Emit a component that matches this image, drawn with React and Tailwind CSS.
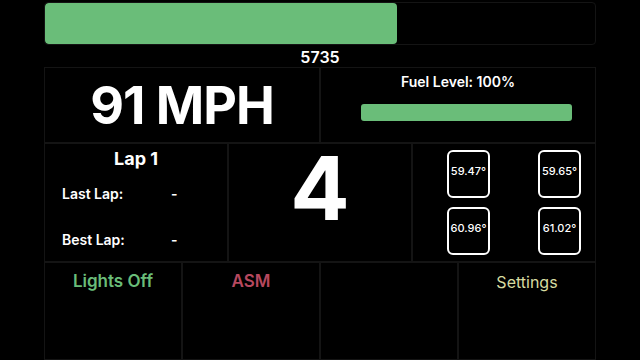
import React from "react"

const temps = ["59.47°", "59.65°", "60.96°", "61.02°"]

function App() {
	const rpm = 5735
	const rpmPct = 64

	return (
		<div
			className="w-[640px] h-[360px] bg-black text-white overflow-hidden"
			style={{ fontFamily: "Inter, 'Noto Sans', sans-serif" }}
		>
			<div className="w-[552px] ml-[44px] h-full flex flex-col pt-[2px]">
				{/* RPM bar */}
				<div className="h-[43px] border border-[#141414] rounded-sm overflow-hidden">
					<div className="h-full bg-[#6abd79] rounded-sm" style={{ width: rpmPct + "%" }} />
				</div>
				<div className="h-[22px] flex items-center justify-center text-[16px] font-semibold pt-[2px]">
					{rpm}
				</div>

				{/* Speed + fuel */}
				<div className="grid grid-cols-2 h-[76px]">
					<div className="border border-[#141414] flex items-center justify-center">
						<span className="text-[52px] font-bold tracking-[-1px] leading-none pt-[2px]">91 MPH</span>
					</div>
					<div className="border border-[#141414] flex flex-col items-center pt-[3px]">
						<span className="text-[14px] font-semibold">Fuel Level: 100%</span>
						<div className="self-start ml-[40px] w-[211px] h-[17px] mt-[12px] bg-[#6abd79] rounded-[3px]" />
					</div>
				</div>

				{/* Lap / gear / tyres */}
				<div className="grid grid-cols-3 h-[119px]">
					<div className="border border-[#141414] flex flex-col pt-[1px]">
						<div className="text-center text-[18px] font-bold">Lap 1</div>
						<div className="flex items-center mt-[11px] pl-[17px] text-[14px] font-semibold">
							<span className="w-[109px]">Last Lap:</span>
							<span>-</span>
						</div>
						<div className="flex items-center mt-[25px] pl-[17px] text-[14px] font-semibold">
							<span className="w-[109px]">Best Lap:</span>
							<span>-</span>
						</div>
					</div>
					<div className="border border-[#141414] flex justify-center">
						<span className="text-[88px] font-bold leading-none">4</span>
					</div>
					<div className="border border-[#141414] grid grid-cols-[43px_43px] content-start gap-y-[9px] pt-[6px] pl-[34px] gap-x-[48px]">
						{temps.map((t) => (
							<div
								key={t}
								className="w-[43px] h-[48px] border-2 border-white rounded-[6px] flex items-center justify-center text-[11px] font-medium pb-[6px]"
							>
								{t}
							</div>
						))}
					</div>
				</div>

				{/* Buttons */}
				<div className="grid grid-cols-4 flex-1">
					<div className="border border-[#141414] text-center pt-[6px] text-[17px] font-semibold text-[#6abd79]">
						Lights Off
					</div>
					<div className="border border-[#141414] text-center pt-[6px] text-[17px] font-semibold text-[#b7485f]">
						ASM
					</div>
					<div className="border border-[#141414]" />
					<div className="border border-[#141414] text-center pt-[7px] text-[16px] text-[#d7dba0]">
						Settings
					</div>
				</div>
			</div>
		</div>
	)
}

export default App
